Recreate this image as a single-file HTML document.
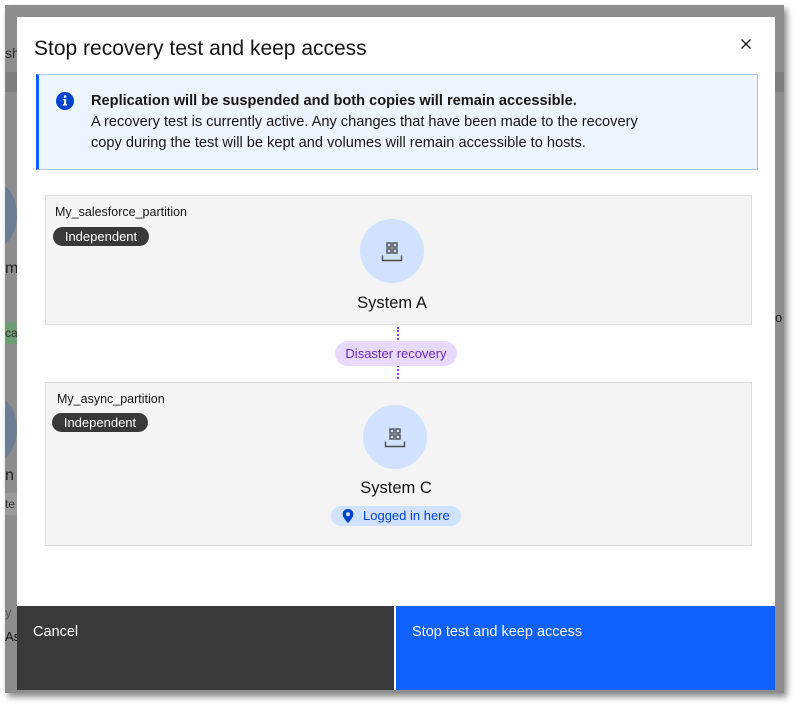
<!DOCTYPE html>
<html><head><meta charset="utf-8"><style>
*{box-sizing:border-box;margin:0;padding:0}
body{width:796px;height:708px;background:#fff;position:relative;overflow:hidden;font-family:"Liberation Sans",sans-serif;color:#161616}
.frame{position:absolute;left:5px;top:5px;width:779px;height:688px;background:#8d8d8d;box-shadow:3px 4px 6px rgba(0,0,0,.45);overflow:hidden}
.modal{position:absolute;left:17px;top:17px;width:758px;height:673px;background:#fff}
.abs{position:absolute}
.title{left:17px;top:20px;font-size:21px;color:#161616;white-space:nowrap}
.close{left:722px;top:20px;width:14px;height:14px}
.notif{left:19px;top:57px;width:722px;height:96px;background:#edf5ff;border:1px solid #a6c8ff;border-left:3px solid #0f62fe}
.notif .t{position:absolute;left:52px;top:16px;font-size:14.6px;line-height:21px;color:#161616}
.card{background:#f4f4f4;border:1px solid #e0e0e0}
.lbl{font-size:12.5px;color:#161616}
.tag{background:#393939;color:#fff;font-size:13px;border-radius:10px;height:19px;line-height:19px;text-align:center}
.circ{width:64px;height:64px;border-radius:50%;background:#d0e2ff}
.sys{font-size:16.5px;color:#161616;text-align:center;width:200px}
.btn{top:589px;height:84px;color:#fff;font-size:14.5px;padding:18px 16px}
</style></head><body>
<div class="frame">
  <div class="abs" style="left:-30px;top:178px;width:42px;height:64px;border-radius:50%;background:#6f7d94"></div>
  <div class="abs" style="left:0;top:255px;font-size:16px;color:#222">m</div>
  <div class="abs" style="left:0;top:317px;width:12px;height:22px;background:#6e9e73;color:#333;font-size:12px;line-height:22px">ca</div>
  <div class="abs" style="left:-30px;top:392px;width:42px;height:64px;border-radius:50%;background:#6f7d94"></div>
  <div class="abs" style="left:0;top:462px;font-size:16px;color:#222">n</div>
  <div class="abs" style="left:0;top:488px;width:12px;height:22px;background:#9a9a9a;color:#333;font-size:12px;line-height:22px">te</div>
  <div class="abs" style="left:0;top:40px;font-size:14px;color:#333">sh</div>
  <div class="abs" style="left:0;top:600px;font-size:13px;color:#555">y</div>
  <div class="abs" style="left:0;top:624px;font-size:13px;color:#111">As</div>
  <div class="abs" style="left:0;top:67px;width:12px;height:20px;background:#7f7f7f"></div>
  <div class="abs" style="left:770px;top:67px;width:12px;height:20px;background:#7f7f7f"></div>
  <div class="abs" style="left:770px;top:305px;font-size:13px;color:#222">o</div>
</div>
<div class="modal">
  <div class="abs title">Stop recovery test and keep access</div>
  <svg class="abs close" viewBox="0 0 14 14"><path d="M2.5 2.5L11.5 11.5M11.5 2.5L2.5 11.5" stroke="#161616" stroke-width="1.3"/></svg>
  <div class="abs notif">
    <svg class="abs" style="left:16px;top:16px" width="20" height="20" viewBox="0 0 20 20"><circle cx="10" cy="10" r="9" fill="#0043ce"/><rect x="9" y="8" width="2.2" height="6" fill="#fff"/><rect x="8" y="13" width="4.2" height="1.5" fill="#fff"/><rect x="7.8" y="8" width="3" height="1.4" fill="#fff"/><circle cx="10.1" cy="5.6" r="1.3" fill="#fff"/></svg>
    <div class="t"><b>Replication will be suspended and both copies will remain accessible.</b><br>A recovery test is currently active. Any changes that have been made to the recovery<br>copy during the test will be kept and volumes will remain accessible to hosts.</div>
  </div>
  <div class="abs card" style="left:28px;top:178px;width:707px;height:130px"></div>
  <div class="abs lbl" style="left:38px;top:188px">My_salesforce_partition</div>
  <div class="abs tag" style="left:36px;top:210px;width:96px">Independent</div>
  <div class="abs circ" style="left:343px;top:202px"></div>
  <svg class="abs" style="left:363px;top:223px;width:24px;height:24px" viewBox="0 0 24 24" fill="none" stroke="#4d4d4d" stroke-width="1.4"><rect x="7" y="3" width="4" height="4"/><rect x="13" y="3" width="4" height="4"/><rect x="7" y="9" width="4" height="4"/><rect x="13" y="9" width="4" height="4"/><path d="M2.5 15.5v5h19v-5"/></svg>
  <div class="abs sys" style="left:275px;top:277px">System A</div>
  <div class="abs" style="left:380px;top:310px;width:0;height:24px;border-left:2px dotted #8a3ffc"></div>
  <div class="abs" style="left:380px;top:348px;width:0;height:14px;border-left:2px dotted #8a3ffc"></div>
  <div class="abs" style="left:318px;top:324px;width:122px;height:25px;border-radius:13px;background:#e8daff;color:#6929c4;font-size:13px;line-height:25px;text-align:center">Disaster recovery</div>
  <div class="abs card" style="left:28px;top:365px;width:707px;height:164px"></div>
  <div class="abs lbl" style="left:40px;top:375px">My_async_partition</div>
  <div class="abs tag" style="left:35px;top:396px;width:96px">Independent</div>
  <div class="abs circ" style="left:346px;top:388px"></div>
  <svg class="abs" style="left:366px;top:409px;width:24px;height:24px" viewBox="0 0 24 24" fill="none" stroke="#4d4d4d" stroke-width="1.4"><rect x="7" y="3" width="4" height="4"/><rect x="13" y="3" width="4" height="4"/><rect x="7" y="9" width="4" height="4"/><rect x="13" y="9" width="4" height="4"/><path d="M2.5 15.5v5h19v-5"/></svg>
  <div class="abs sys" style="left:279px;top:462px">System C</div>
  <div class="abs" style="left:314px;top:489px;width:130px;height:20px;border-radius:10px;background:#d0e2ff;color:#0043ce;font-size:13px;line-height:20px;padding-left:32px">Logged in here</div>
  <svg class="abs" style="left:324px;top:491px" width="14" height="16" viewBox="0 0 14 16"><path d="M7 1C3.9 1 1.6 3.3 1.6 6.2 1.6 9.6 7 15 7 15s5.4-5.4 5.4-8.8C12.4 3.3 10.1 1 7 1z" fill="#0043ce"/><circle cx="7" cy="6.2" r="2" fill="#d0e2ff"/></svg>
  <div class="abs btn" style="left:0;width:377px;background:#393939">Cancel</div>
  <div class="abs btn" style="left:379px;width:379px;background:#0f62fe">Stop test and keep access</div>
</div>
</body></html>
